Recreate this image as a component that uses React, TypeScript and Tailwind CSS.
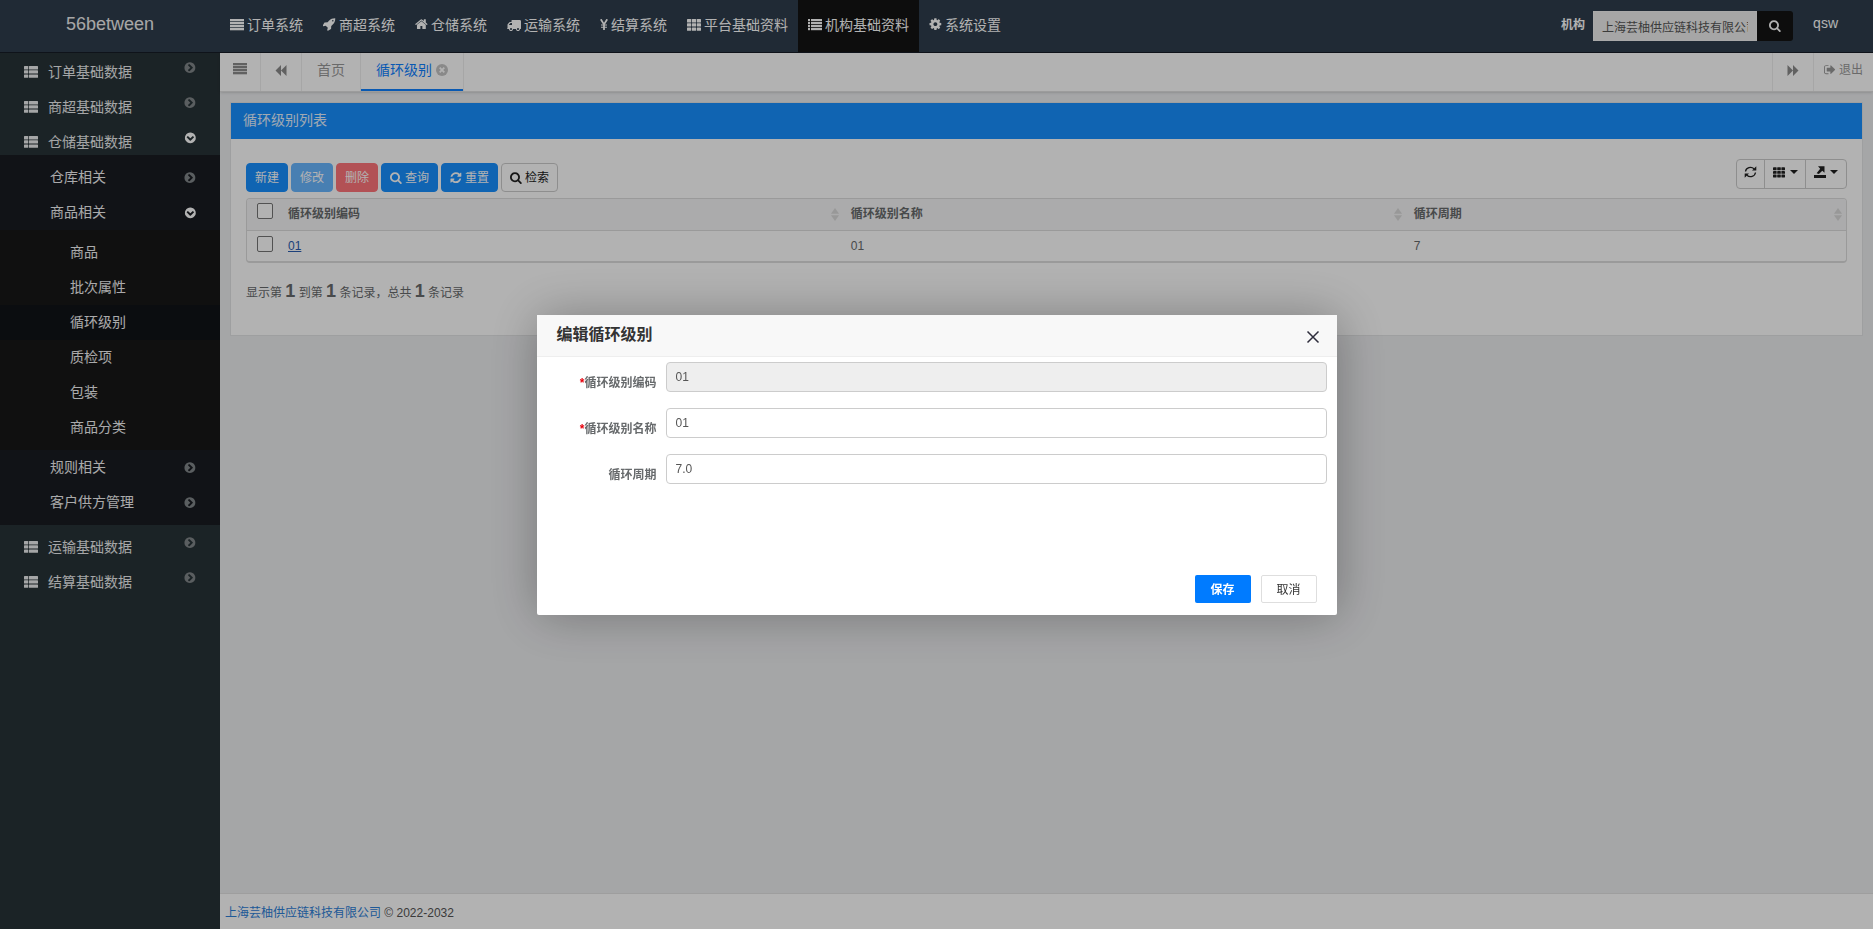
import { useState } from 'react';
import type { ReactNode } from 'react';
import clsx from 'clsx';

const PATHS = {
  rocket: 'M1440 448q0-40-28-68t-68-28-68 28-28 68 28 68 68 28 68-28 28-68zm224-288q0 249-75.5 430.5T1335 951q-81 80-195 176l-20 379q-2 16-16 26l-384 224q-7 4-16 4-12 0-23-9l-64-64q-13-14-8-32l85-276-281-281-276 85q-3 1-9 1-14 0-23-9l-64-64q-17-19-5-39l224-384q10-14 26-16l379-20q96-114 176-195 188-187 358-258t431-71q14 0 24 9.5t10 22.5z',
  home: 'M1472 992v480q0 26-19 45t-45 19h-384v-384H768v384H384q-26 0-45-19t-19-45V992q0-1 .5-3t.5-3l575-474 575 474q1 2 1 6zm223-69l-62 74q-8 9-21 11h-3q-13 0-21-7L896 424l-692 577q-12 8-24 7-13-2-21-11l-62-74q-8-10-7-23.5t11-21.5l719-599q32-26 76-26t76 26l244 204V288q0-14 9-23t23-9h192q14 0 23 9t9 23v408l219 182q10 8 11 21.5t-7 23.5z',
  truck: 'M640 1408q0-52-38-90t-90-38-90 38-38 90 38 90 90 38 90-38 38-90zm-384-512h384V640H482q-13 0-22 9L265 844q-9 9-9 22v30zm1280 512q0-52-38-90t-90-38-90 38-38 90 38 90 90 38 90-38 38-90zm256-1088v1024q0 15-4 26.5t-13.5 18.5-16.5 11.5-23.5 6-22.5 2-25.5 0-22.5-.5q0 106-75 181t-181 75-181-75-75-181H768q0 106-75 181t-181 75-181-75-75-181h-64q-3 0-22.5.5t-25.5 0-22.5-2-23.5-6-16.5-11.5T4 1370.5 0 1344q0-26 19-45t45-19V960q0-8-.5-35t0-38 2.5-34.5 6.5-37 14-30.5 22.5-30l198-198q19-19 50.5-32t58.5-13h160V320q0-26 19-45t45-19h1024q26 0 45 19t19 45z',
  cog: 'M1152 896q0-106-75-181t-181-75-181 75-75 181 75 181 181 75 181-75 75-181zm512-109v222q0 12-8 23t-20 13l-185 28q-19 54-39 91 35 50 107 138 10 12 10 25t-9 23q-27 37-99 108t-94 71q-12 0-26-9l-138-108q-44 23-91 38-16 136-29 186-7 28-36 28H785q-14 0-24.5-8.5T749 1634l-28-184q-49-16-90-37l-141 107q-10 9-25 9-14 0-25-11-126-114-165-168-7-10-7-23 0-12 8-23 15-21 51-66.5t54-70.5q-27-50-41-99l-183-27q-13-2-21-12.5t-8-23.5V783q0-12 8-23t19-13l186-28q14-46 39-92-40-57-107-138-10-12-10-24 0-10 9-23 26-36 98.5-107.5T465 263q13 0 26 10l138 107q44-23 91-38 16-136 29-186 7-28 36-28h222q14 0 24.5 8.5T1043 158l28 184q49 16 90 37l142-107q9-9 24-9 13 0 25 10 129 119 165 170 7 8 7 22 0 12-8 23-15 21-51 66.5t-54 70.5q26 50 41 98l183 28q13 2 21 12.5t8 23.5z',
  search: 'M1216 832q0-185-131.5-316.5T768 384 451.5 515.5 320 832t131.5 316.5T768 1280t316.5-131.5T1216 832zm512 832q0 52-38 90t-90 38q-54 0-90-38l-343-342q-179 124-399 124-143 0-273.5-55.5t-225-150-150-225T64 832t55.5-273.5 150-225 225-150T768 128t273.5 55.5 225 150 150 225T1472 832q0 220-124 399l343 343q37 37 37 90z',
  refresh: 'M1639 1056q0 5-1 7-64 268-268 434.5T892 1664q-146 0-282.5-55T366 1452l-129 129q-19 19-45 19t-45-19-19-45v-448q0-26 19-45t45-19h448q26 0 45 19t19 45-19 45l-137 137q71 66 161 102t187 36q134 0 250-65t186-179q11-17 53-117 8-23 30-23h192q13 0 22.5 9.5t9.5 22.5zm25-800v448q0 26-19 45t-45 19h-448q-26 0-45-19t-19-45 19-45l138-138Q1097 384 896 384q-134 0-250 65T460 628q-11 17-53 117-8 23-30 23H178q-13 0-22.5-9.5T146 736v-7q65-268 270-434.5T896 128q146 0 284 55.5T1425 340l130-129q19-19 45-19t45 19 19 45z',
  chevronCircle: 'M845 1395l454-454q19-19 19-45t-19-45L845 397q-19-19-45-19t-45 19L653 499q-19 19-19 45t19 45l307 307-307 307q-19 19-19 45t19 45l102 102q19 19 45 19t45-19zm819-499q0 209-103 385.5T1281.5 1561 896 1664t-385.5-103T231 1281.5 128 896t103-385.5T510.5 231 896 128t385.5 103T1561 510.5 1664 896z',
  signOut: 'M704 1440q0 4 1 20t.5 26.5-3 23.5-10 19.5-20.5 6.5H352q-119 0-203.5-84.5T64 1248V544q0-119 84.5-203.5T352 256h320q13 0 22.5 9.5T704 288q0 4 1 20t.5 26.5-3 23.5-10 19.5T672 384H352q-66 0-113 47t-47 113v704q0 66 47 113t113 47h312l11.5 1 11.5 3 8 5.5 7 9 2 13.5zm928-544q0 26-19 45l-544 544q-19 19-45 19t-45-19-19-45v-288H512q-26 0-45-19t-19-45V704q0-26 19-45t45-19h448V352q0-26 19-45t45-19 45 19l544 544q19 19 19 45z',
};

function Icon({ name, className = 'size-[13px]' }: { name: keyof typeof PATHS; className?: string }) {
  return (
    <svg
      viewBox={name === 'truck' ? '0 0 1792 1792' : '64 96 1696 1696'}
      fill="currentColor"
      aria-hidden="true"
      className={clsx('shrink-0', className)}
    >
      <path d={PATHS[name]} />
    </svg>
  );
}

function Bars() {
  return (
    <svg viewBox="0 0 14 12" fill="currentColor" aria-hidden="true" className="w-3.5 h-3 shrink-0">
      {[0, 3, 6, 9].map(y => <rect key={y} x="0" y={y} width="14" height="2.300" />)}
    </svg>
  );
}

function ListIcon() {
  return (
    <svg viewBox="0 0 14 12" fill="currentColor" aria-hidden="true" className="w-3.5 h-3 shrink-0">
      {[0, 3, 6, 9].map(y => (
        <g key={y}>
          <rect x="0" y={y} width="2" height="2.200" />
          <rect x="3" y={y} width="11" height="2.200" />
        </g>
      ))}
    </svg>
  );
}

function Grid({ className = 'w-3.5 h-3' }: { className?: string }) {
  return (
    <svg viewBox="0 0 14 12" fill="currentColor" aria-hidden="true" className={clsx('shrink-0', className)}>
      {[0, 4.2, 8.4].map(y => [0, 4.9, 9.8].map(x => <rect key={`${x}-${y}`} x={x} y={y} width="4.200" height="3.400" rx="0.500" />))}
    </svg>
  );
}

function ThList() {
  return (
    <svg viewBox="0 0 14 12" fill="currentColor" aria-hidden="true" className="w-3.5 h-3 shrink-0">
      {[0, 4.2, 8.4].map(y => (
        <g key={y}>
          <rect x="0" y={y} width="4.200" height="3.400" rx="0.500" />
          <rect x="4.900" y={y} width="9.100" height="3.400" rx="0.500" />
        </g>
      ))}
    </svg>
  );
}

function Yen() {
  return (
    <svg viewBox="0 0 8 11" fill="none" stroke="currentColor" strokeWidth="1.800" aria-hidden="true" className="w-2 h-[11px] shrink-0">
      <path d="M0.8 0.3 4 5.4 7.2 0.3M4 5.2V11" />
      <path d="M1 6h6M1 8.3h6" strokeWidth="1.100" />
    </svg>
  );
}

function DoubleArrow({ flip = false }: { flip?: boolean }) {
  return (
    <svg viewBox="0 0 12 11" fill="currentColor" aria-hidden="true" className={clsx('w-3 h-[11px]', flip && 'rotate-180')}>
      <path d="M6 0v11L0.5 5.5zM11.5 0v11L6 5.5z" />
    </svg>
  );
}

function Caret() {
  return (
    <svg viewBox="0 0 8 4" fill="currentColor" aria-hidden="true" className="w-2 h-1">
      <path d="M0 0h8L4 4z" />
    </svg>
  );
}

function SortIcon() {
  return (
    <svg viewBox="0 0 8 13" fill="#dadada" aria-hidden="true" className="w-2 h-[13px] shrink-0">
      <path d="M4 0l4 5.800H0zM4 13l4-5.800H0z" />
    </svg>
  );
}

const SYSTEMS: { label: string; icon: ReactNode; active?: boolean }[] = [
  { label: '订单系统', icon: <Bars /> },
  { label: '商超系统', icon: <Icon name="rocket" /> },
  { label: '仓储系统', icon: <Icon name="home" /> },
  { label: '运输系统', icon: <Icon name="truck" className="size-3.5" /> },
  { label: '结算系统', icon: <Yen /> },
  { label: '平台基础资料', icon: <Grid /> },
  { label: '机构基础资料', icon: <ListIcon />, active: true },
  { label: '系统设置', icon: <Icon name="cog" /> },
];

const PRODUCT_ITEMS = ['商品', '批次属性', '循环级别', '质检项', '包装', '商品分类'];
const CURRENT = '循环级别';

function Chevron({ open = false }: { open?: boolean }) {
  return <Icon name="chevronCircle" className={clsx('size-3', open ? 'rotate-90 text-white' : 'text-[#82878a]')} />;
}

function RootItem({ label, open }: { label: string; open?: boolean }) {
  return (
    <a href="#" className="flex h-[35px] items-center px-6 text-sm text-[#eceeef]">
      <span className="flex flex-1 items-center gap-2.5 pt-2">
        <ThList /> {label}
      </span>
      <Chevron open={open} />
    </a>
  );
}

function SubItem({ label, open }: { label: string; open?: boolean }) {
  return (
    <a href="#" className="flex h-[35px] items-center justify-between pl-[50px] pr-6 text-sm text-[#f4f4f5]">
      <span className="pb-0.5">{label}</span>
      <Chevron open={open} />
    </a>
  );
}

function Sidebar() {
  return (
    <nav className="-mt-[3px] w-[220px] shrink-0 bg-[#283337]">
      <RootItem label="订单基础数据" />
      <RootItem label="商超基础数据" />
      <RootItem label="仓储基础数据" open />
      <div className="bg-[#191c22] py-[5px]">
        <SubItem label="仓库相关" />
        <SubItem label="商品相关" open />
        <ul className="bg-[#171717] py-[5px]">
          {PRODUCT_ITEMS.map(item => (
            <li key={item}>
              <a
                href="#"
                className={clsx('flex h-[35px] items-center pb-0.5 pl-[70px] text-sm text-[#f4f4f5]', item === CURRENT && 'bg-[#111318]')}
              >
                {item}
              </a>
            </li>
          ))}
        </ul>
        <SubItem label="规则相关" />
        <SubItem label="客户供方管理" />
      </div>
      <RootItem label="运输基础数据" />
      <RootItem label="结算基础数据" />
    </nav>
  );
}

function TopBar() {
  return (
    <header className="relative z-10 flex h-[53px] border-b border-[#161c26] bg-[#2e3d4c] text-white">
      <a href="#" className="flex w-[220px] shrink-0 items-center justify-center pb-1 text-lg text-[#f0f0f0]">56between</a>
      <nav className="flex">
        {SYSTEMS.map(s => (
          <a
            key={s.label}
            href="#"
            className={clsx('flex items-center gap-[3px] whitespace-nowrap px-2.5 pb-[3px] text-sm', s.active && 'bg-[#131313]')}
          >
            {s.icon}
            {s.label}
          </a>
        ))}
      </nav>
      <form className="ml-auto flex items-center pr-5" onSubmit={e => e.preventDefault()}>
        <label htmlFor="org" className="mr-2 pb-[3px] text-xs font-bold">机构</label>
        <input
          id="org"
          defaultValue="上海芸柚供应链科技有限公司"
          className="h-[30px] w-[164px] border border-[#f2f2f2] bg-[#eee] px-2 text-xs text-[#555]"
        />
        <button type="submit" aria-label="搜索" className="flex h-[30px] w-9 items-center justify-center rounded-r-[3px] bg-[#131313]">
          <Icon name="search" className="size-3" />
        </button>
      </form>
      <a href="#" className="flex items-center pb-1.5 pr-[35px] text-sm">qsw</a>
    </header>
  );
}

function TabBar() {
  return (
    <div className="flex h-[39px] border-b border-[#e0e0e0] bg-white text-sm text-[#999] shadow-sm">
      <button aria-label="菜单" className="flex w-[41px] items-center justify-center border-r border-[#eee] pb-1.5 text-[#8c8c8c]">
        <Bars />
      </button>
      <button aria-label="向左" className="flex w-[41px] items-center justify-center border-r border-[#eee] pb-1 text-[#8c8c8c]">
        <DoubleArrow />
      </button>
      <a href="#" className="flex items-center border-r border-[#eee] px-[15px] pb-1">首页</a>
      <a href="#" className="flex items-center gap-1 border-b-2 border-[#0d80ff] px-[15px] pb-0.5 text-[#0d80ff]">
        循环级别
        <svg viewBox="0 0 12 12" aria-hidden="true" className="size-3">
          <circle cx="6" cy="6" r="6" fill="#c4c4c4" />
          <path d="M3.700 3.700l4.600 4.600M8.300 3.700L3.700 8.300" stroke="#fff" strokeWidth="1.800" />
        </svg>
      </a>
      <div className="flex-1 border-l border-[#eee]" />
      <button aria-label="向右" className="flex w-[41px] items-center justify-center border-l border-[#eee] pb-1 text-[#8c8c8c]">
        <DoubleArrow flip />
      </button>
      <a href="#" className="flex items-center gap-[3px] border-l border-[#eee] px-2.5 pb-1 text-xs">
        <Icon name="signOut" className="size-3" /> 退出
      </a>
    </div>
  );
}

const BTN = 'flex h-[29px] items-center gap-[3px] rounded border px-2 text-xs';

function Toolbar() {
  return (
    <div className="flex items-start justify-between">
      <div className="flex gap-[3px] pt-1">
        <button className={clsx(BTN, 'border-[#1890ff] bg-[#1890ff] text-white')}>新建</button>
        <button disabled className={clsx(BTN, 'border-[#1890ff] bg-[#1890ff] text-white opacity-65')}>修改</button>
        <button disabled className={clsx(BTN, 'border-[#ff2b34] bg-[#ff2b34] text-white opacity-65')}>删除</button>
        <button className={clsx(BTN, 'border-[#1890ff] bg-[#1890ff] text-white')}>
          <Icon name="search" className="size-3" /> 查询
        </button>
        <button className={clsx(BTN, 'border-[#1890ff] bg-[#1890ff] text-white')}>
          <Icon name="refresh" className="size-3" /> 重置
        </button>
        <button className={clsx(BTN, 'border-[#ccc] bg-white text-[#222]')}>
          <Icon name="search" className="size-3" /> 检索
        </button>
      </div>
      <div className="flex h-[30px] divide-x divide-[#ccc] rounded border border-[#ccc] text-[#222]">
        <button aria-label="刷新" className="flex w-7 items-center justify-center pb-1">
          <svg viewBox="0 0 13 12" fill="none" stroke="currentColor" strokeWidth="1.300" aria-hidden="true" className="w-[13px] h-3">
            <path d="M1.500 5.500A5 4.700 0 0 1 10 2.800M11.500 6.500A5 4.700 0 0 1 3 9.200" />
            <path d="M12.300 0.300V4.600H8zM0.700 11.700V7.400h4.300z" fill="currentColor" stroke="none" />
          </svg>
        </button>
        <button aria-label="列" className="flex w-[41px] items-center justify-center gap-[5px] pb-1">
          <Grid className="w-3 h-[11px]" />
          <Caret />
        </button>
        <button aria-label="导出" className="flex w-10 items-center justify-center gap-1 pb-1">
          <svg viewBox="0 0 12 12" fill="currentColor" aria-hidden="true" className="size-3">
            <path d="M0 9h12v3H0zM4 0.300h6.500v6.400L8.300 4.700 4.900 8 2.600 7.200 6.200 2.700z" />
          </svg>
          <Caret />
        </button>
      </div>
    </div>
  );
}

const CHECKBOX = 'block size-4 appearance-none rounded-[2px] border border-[#767676] bg-white';
const COLUMNS = ['循环级别编码', '循环级别名称', '循环周期'];

function DataTable() {
  return (
    <div className="mt-1.5 overflow-hidden rounded border border-b-2 border-[#ddd]">
      <table className="w-full table-fixed border-collapse text-left text-xs text-[#676a6c]">
        <colgroup>
          <col className="w-[33px]" />
          <col className="w-[35.2%]" />
          <col className="w-[35.2%]" />
          <col />
        </colgroup>
        <thead>
          <tr className="h-[31px] border-b border-[#ddd] bg-[#f5f5f6]">
            <th className="pb-1.5 pl-2.5">
              <input type="checkbox" aria-label="全选" className={CHECKBOX} />
            </th>
            {COLUMNS.map(c => (
              <th key={c} className="pl-2 pr-1">
                <div className="flex items-center justify-between">
                  {c}
                  <SortIcon />
                </div>
              </th>
            ))}
          </tr>
        </thead>
        <tbody>
          <tr className="h-[31px]">
            <td className="pb-1 pl-2.5">
              <input type="checkbox" aria-label="选择 01" className={CHECKBOX} />
            </td>
            <td className="px-2"><a href="#" className="text-[#2a5db0] underline">01</a></td>
            <td className="px-2">01</td>
            <td className="px-2">7</td>
          </tr>
        </tbody>
      </table>
    </div>
  );
}

function Panel() {
  return (
    <section className="m-2.5 border border-[#e3e4e5] bg-white">
      <h5 className="flex h-9 items-center bg-[#1890ff] px-3 pb-0.5 text-sm text-[#e6f2ff]">循环级别列表</h5>
      <div className="px-[15px] pb-[30px] pt-5">
        <Toolbar />
        <DataTable />
        <p className="mt-3.5 text-xs text-[#676a6c]">
          显示第 <b className="text-lg">1</b> 到第 <b className="text-lg">1</b> 条记录，总共 <b className="text-lg">1</b> 条记录
        </p>
      </div>
    </section>
  );
}

function Field({ id, label, value, required, disabled }: { id: string; label: string; value: string; required?: boolean; disabled?: boolean }) {
  return (
    <div className="flex gap-[9px]">
      <label htmlFor={id} className="w-[120px] shrink-0 pt-[13px] text-right text-xs font-bold text-[#676a6c]">
        {required && <span className="text-red-600">*</span>}
        {label}
      </label>
      <input
        id={id}
        defaultValue={value}
        disabled={disabled}
        className="h-[30px] min-w-0 flex-1 rounded border border-[#ccc] bg-white px-[9px] text-xs text-[#555] disabled:bg-[#eee]"
      />
    </div>
  );
}

function EditDialog({ onClose }: { onClose: () => void }) {
  return (
    <div className="fixed inset-0 z-50 flex items-center justify-center bg-black/30">
      <div
        role="dialog"
        aria-labelledby="edit-title"
        className="flex min-h-[300px] w-[800px] flex-col rounded-[2px] bg-white shadow-[1px_1px_50px_rgba(0,0,0,0.3)]"
      >
        <div className="flex h-[42px] items-center justify-between border-b border-[#eee] bg-[#f8f8f8] pl-5 pr-[17px]">
          <h2 id="edit-title" className="text-base font-bold text-[#333]">编辑循环级别</h2>
          <button onClick={onClose} aria-label="关闭" className="pt-1">
            <svg viewBox="0 0 14 14" fill="none" stroke="#2e2d3c" strokeWidth="1.500" aria-hidden="true" className="size-3.5">
              <path d="M1.500 1.500l11 11M12.500 1.500l-11 11" />
            </svg>
          </button>
        </div>
        <form className="flex flex-1 flex-col gap-4 pr-2.5 pt-[5px]" onSubmit={e => e.preventDefault()}>
          <Field id="code" label="循环级别编码" value="01" required disabled />
          <Field id="name" label="循环级别名称" value="01" required />
          <Field id="cycle" label="循环周期" value="7.0" />
          <div className="mt-auto flex justify-end gap-2.5 pb-3 pr-2.5">
            <button type="submit" className="h-7 w-14 rounded-[2px] bg-[#007bff] pt-0.5 text-xs font-bold text-white">保存</button>
            <button type="button" onClick={onClose} className="h-7 w-14 rounded-[2px] border border-[#dedede] bg-white pt-0.5 text-xs text-[#333]">取消</button>
          </div>
        </form>
      </div>
    </div>
  );
}

export default function App() {
  const [open, setOpen] = useState(true);

  return (
    <div className="flex min-h-screen flex-col bg-[#edeef0] font-['Liberation_Sans','Noto_Sans_CJK_SC',sans-serif]">
      <TopBar />
      <div className="flex flex-1">
        <Sidebar />
        <div className="flex min-w-0 flex-1 flex-col">
          <TabBar />
          <main className="flex-1">
            <Panel />
          </main>
          <footer className="flex h-9 items-center border-t border-[#e2e2e2] bg-white px-[5px] pt-0.5 text-xs text-[#555]">
            <p><a href="#" className="text-[#2d80d8]">上海芸柚供应链科技有限公司</a> © 2022-2032</p>
          </footer>
        </div>
      </div>
      {open && <EditDialog onClose={() => setOpen(false)} />}
    </div>
  );
}
